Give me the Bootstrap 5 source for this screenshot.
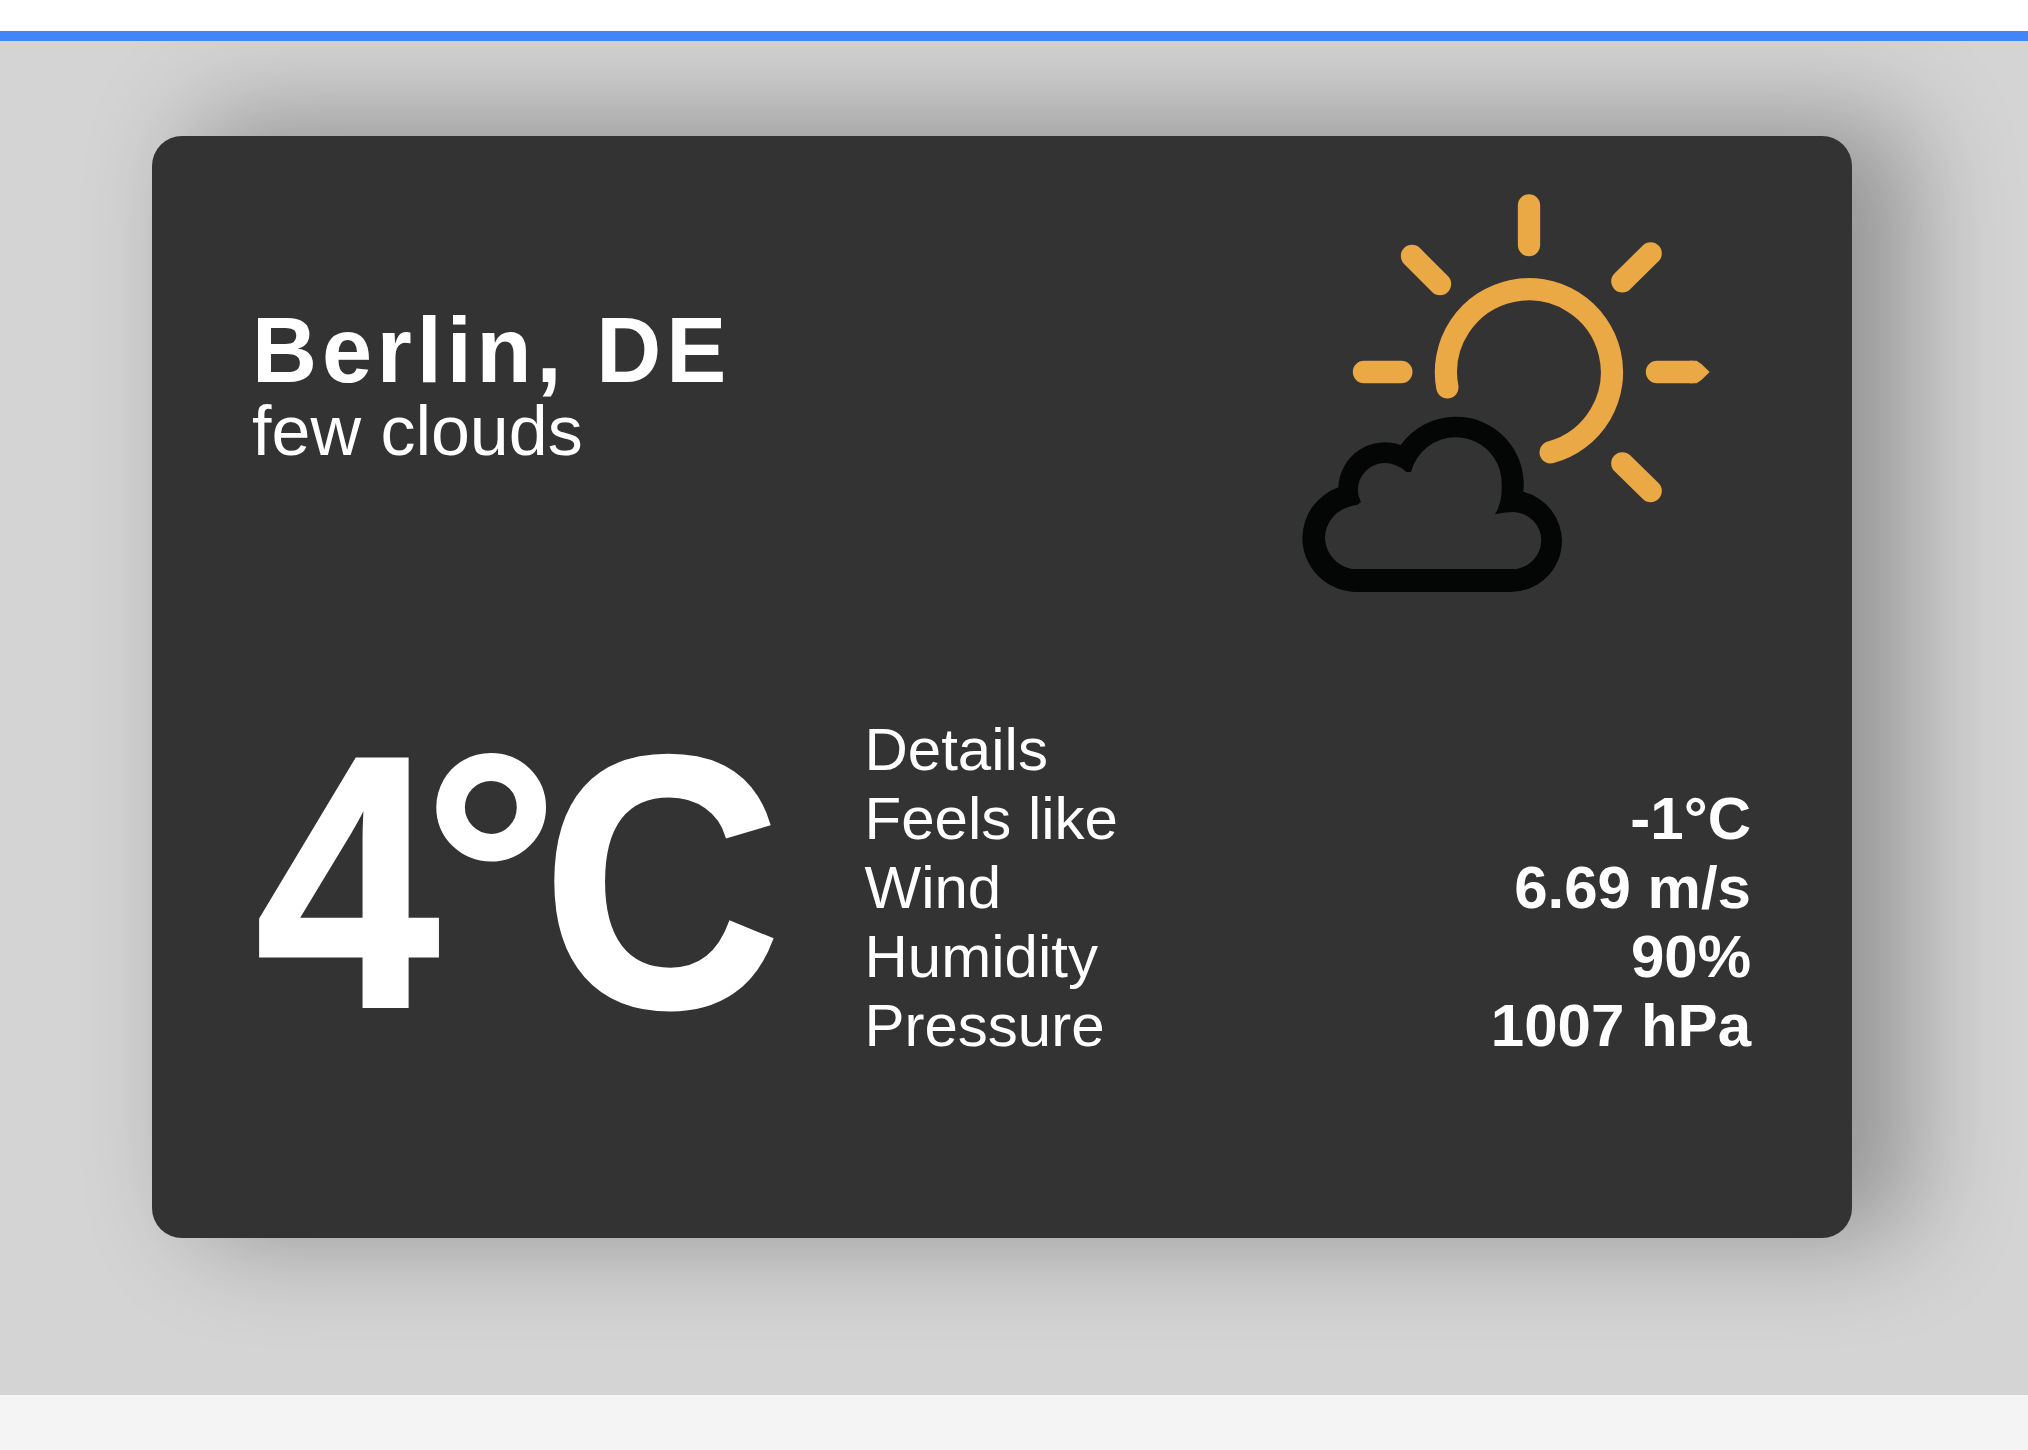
<!DOCTYPE html>
<html lang="en">
<head>
<meta charset="utf-8">
<meta name="viewport" content="width=device-width, initial-scale=1">
<title>Weather</title>
<link href="https://cdn.jsdelivr.net/npm/bootstrap@5.3.0/dist/css/bootstrap.min.css" rel="stylesheet">
<style>
  body { font-family: "Liberation Sans", Arial, sans-serif; background: #f4f4f4; height: 1450px; overflow: hidden; }
  .search-strip { height: 41px; border-bottom: 10px solid #4285f8; }
  .stage { height: 1354px; background: #d4d4d4; padding: 95px 176px 0 152px; overflow: hidden; }
  .weather { height: 1102px; border-radius: 30px; background: #333; padding: 0 100px 100px; box-shadow: 50px -10px 106px 10px rgba(0, 0, 0, .3); }
  .city { font-size: 90px; line-height: 90px; letter-spacing: 4.900px; font-weight: 700; }
  .city span { transform: scaleY(1.035); transform-origin: 0 76px; }
  .summary { font-size: 70px; line-height: 70px; }
  .sky-icon { width: 500px; height: 500px; filter: blur(.7px); }
  .temperature { width: 512px; height: 402px; margin: 50px 0; font-size: 350px; line-height: 402px; letter-spacing: -25px; font-weight: 700; white-space: nowrap; -webkit-text-stroke: 3px #fff; }
  .temperature span { display: inline-block; }
  .temp-value { transform: translate(-2px, -1.500px) scale(.944, 1.028); transform-origin: 99px 322px; }
  .temp-degree { transform: translate(-1px, -11px) scale(.975, .98); transform-origin: 70px 132px; }
  .temp-unit { transform: translate(-2px, -1.500px) scale(.944, 1.028); transform-origin: 128px 322px; }
  .details { padding: 0 1px 0 100.500px; font-size: 60px; line-height: 69px; }
  .details span, .city span, .summary span { display: inline-block; }
</style>
</head>
<body>
<header class="search-strip bg-white"></header>
<main class="stage">
  <section class="weather text-white">
    <div class="d-flex justify-content-between align-items-center">
      <div>
        <h1 class="city m-0"><span>Berlin, DE</span></h1>
        <p class="summary m-0"><span>few clouds</span></p>
      </div>
      <svg class="sky-icon flex-shrink-0" viewBox="-84 -102 1500 1500" role="img" aria-label="few clouds">
        <g fill="none" stroke="#eaa944" stroke-width="67" stroke-linecap="round">
          <path d="M502 652A249 249 0 1 1 812 847"/>
          <path d="M747 106V225M396 258L480 342M1112 250L1027 334M1027 880L1112 963M252 606H364M1131 606H1235"/>
        </g>
        <path fill="#eaa944" d="M1230 572.500H1250L1265 583L1289 606L1265 629L1250 639.500H1230Z"/>
        <path fill="#040605" fill-rule="evenodd" d="M230 1266A163 163 0 0 1 67 1103A163 163 0 0 1 175 952A140 140 0 0 1 362 825A203 203 0 0 1 527 740A203 203 0 0 1 730 965A155 155 0 0 1 846 1113A154 154 0 0 1 690 1266Z
          M215 1197H710A90 90 0 0 0 784 1113A86 86 0 0 0 700 1026Q680 1026 645 1033Q668 995 665 940A138 138 0 0 0 527 802A138 138 0 0 0 393 906L379 906Q365 892 347 886A81 81 0 0 0 235 975L243 997L232 1004Q215 1006 197 1014A98 98 0 0 0 135 1105A98 98 0 0 0 215 1197Z"/>
      </svg>
    </div>
    <div class="d-flex justify-content-between align-items-center">
      <div class="temperature flex-shrink-0"><span class="temp-value">4</span><span class="temp-degree">°</span><span class="temp-unit">C</span></div>
      <div class="details w-100">
        <div class="d-flex justify-content-between"><span>Details</span></div>
        <div class="d-flex justify-content-between"><span>Feels like</span><span class="fw-bold">-1°C</span></div>
        <div class="d-flex justify-content-between"><span>Wind</span><span class="fw-bold">6.69 m/s</span></div>
        <div class="d-flex justify-content-between"><span>Humidity</span><span class="fw-bold">90%</span></div>
        <div class="d-flex justify-content-between"><span>Pressure</span><span class="fw-bold">1007 hPa</span></div>
      </div>
    </div>
  </section>
</main>
<script src="https://cdn.jsdelivr.net/npm/bootstrap@5.3.0/dist/js/bootstrap.bundle.min.js"></script>
</body>
</html>
